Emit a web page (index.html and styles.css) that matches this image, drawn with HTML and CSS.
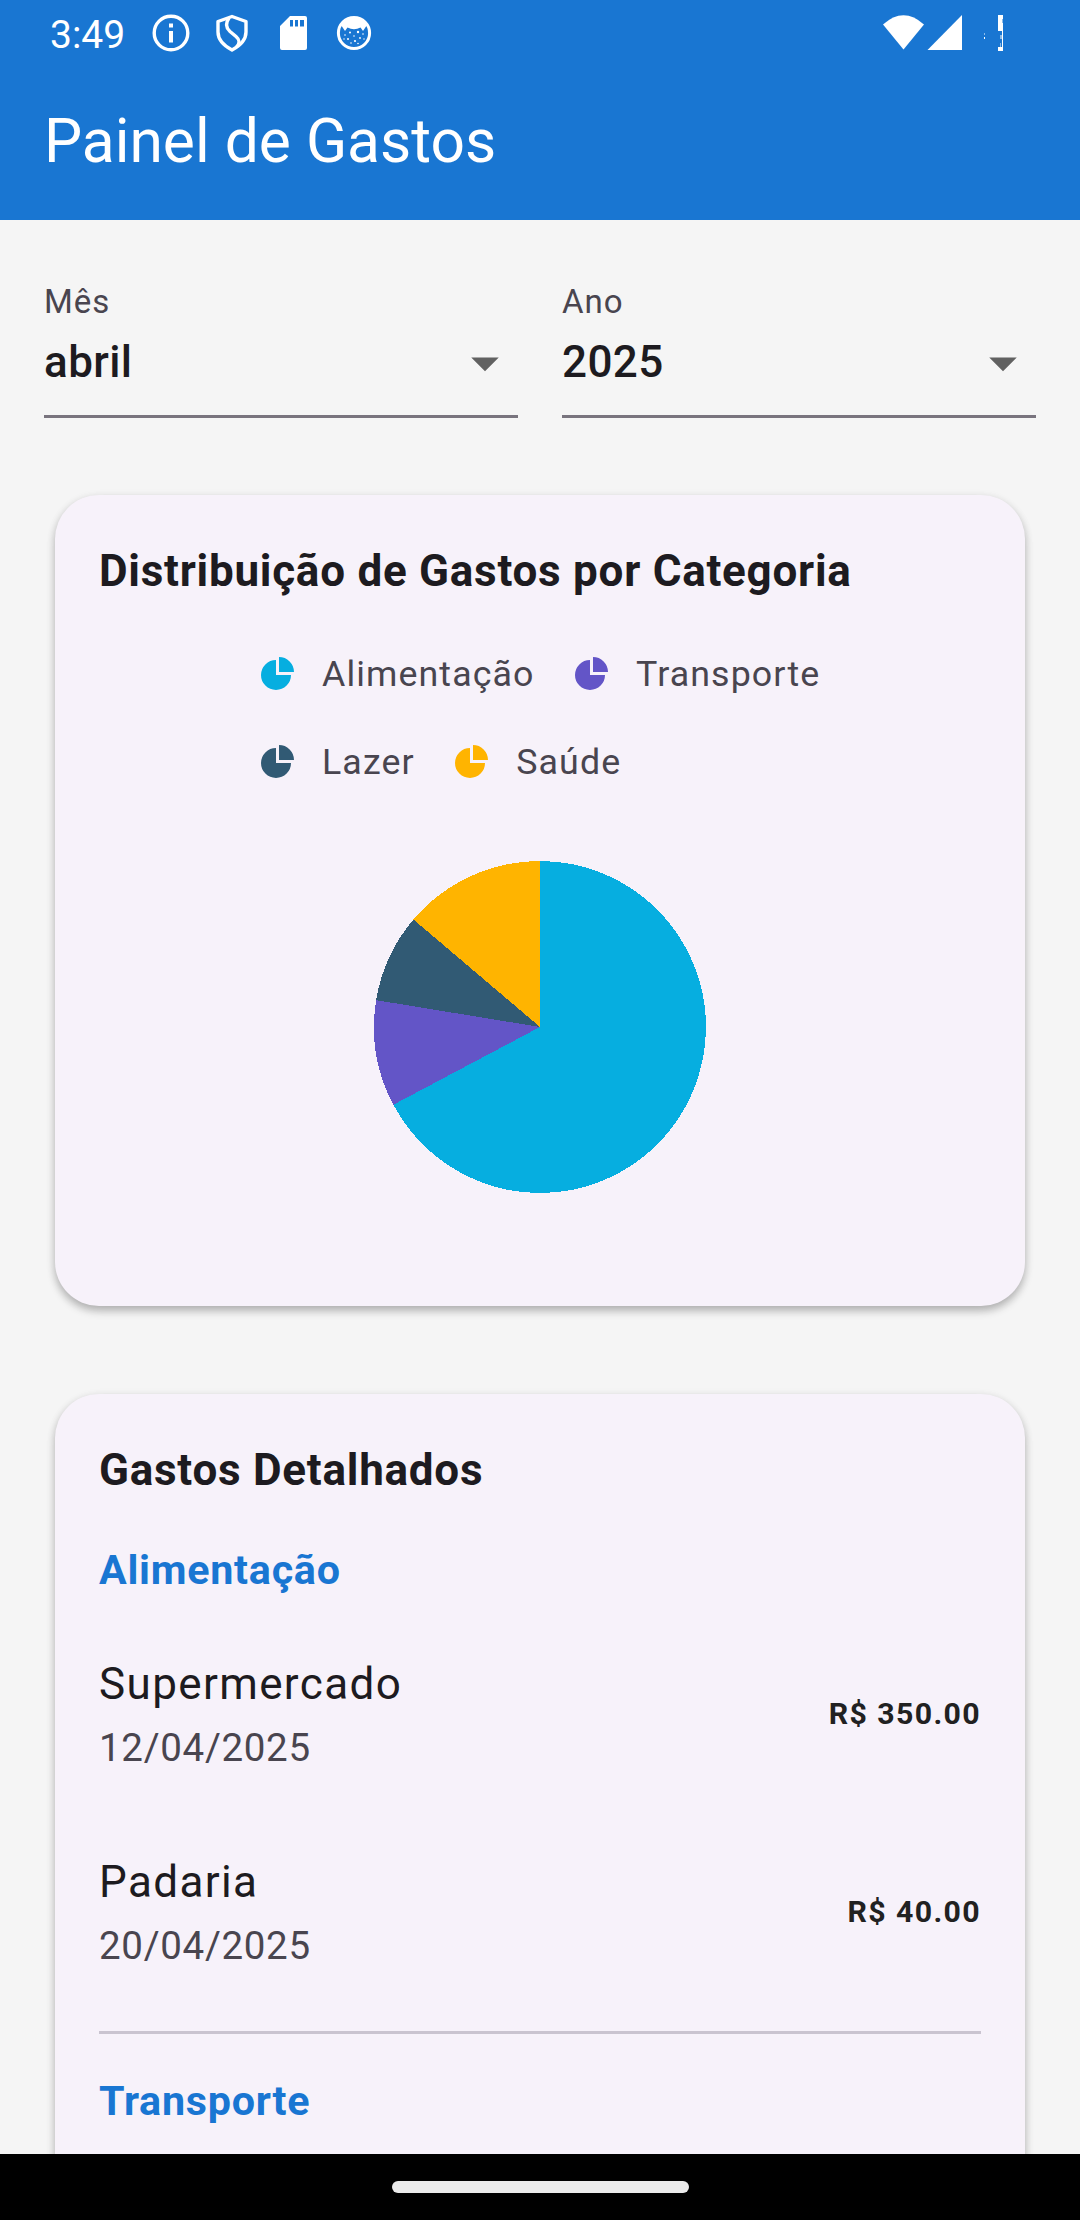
FILE: index.html
```html
<!DOCTYPE html>
<html lang="pt-BR">
<head>
<meta charset="utf-8">
<title>Painel de Gastos</title>
<link rel="stylesheet" href="styles.css">
</head>
<body>
<div class="screen">
  <header class="app-bar">
    <div class="status-bar">
      <span class="clock">3:49</span>
      <svg class="info" width="38" height="38" viewBox="0 0 38 38"><circle cx="19" cy="19" r="16.8" fill="none" stroke="#fff" stroke-width="3.4"/><path d="M17 9.500h4v4h-4zM17 17h4v11.500h-4z" fill="#fff"/></svg>
      <svg class="shield" width="32" height="38" viewBox="0 0 32 38"><path d="M16 2.500 30 7.500V18C30 26 23.500 32 16 36 8.500 32 2 26 2 18V7.500Z" fill="none" stroke="#fff" stroke-width="3.400" stroke-linejoin="round"/><path d="M13 4C9.500 9 10 14 14 17.500L20 22.500C24 26 24 29 20.500 33" fill="none" stroke="#fff" stroke-width="3.400"/></svg>
      <svg class="card-slot" width="27" height="34" viewBox="0 0 27 34"><path fill="#fff" fill-rule="evenodd" d="M10 0H25a2 2 0 0 1 2 2V32a2 2 0 0 1-2 2H2a2 2 0 0 1-2-2V10ZM10 4v6.500h3V4ZM15 4v6.500h3V4ZM20 4v6.500h4V4Z"/></svg>
      <svg class="face" width="36" height="36" viewBox="0 0 36 36"><circle cx="18" cy="18" r="15.600" fill="none" stroke="#fff" stroke-width="3"/><path d="M5 10 10 4 18 2 26 4 31 10 27 16 24.500 12.500Q18 16 11.500 12.500L9 16Z" fill="#fff"/><g fill="#fff"><circle cx="14" cy="17.500" r="1"/><circle cx="22" cy="17" r="1.200"/><circle cx="9" cy="20" r=".8"/><circle cx="27" cy="19" r=".8"/><circle cx="18" cy="21" r=".8"/><circle cx="12" cy="24" r="1"/><circle cx="24" cy="23" r=".9"/><circle cx="19" cy="26" r="1.100"/><circle cx="15" cy="28" r=".8"/><circle cx="22" cy="28.500" r=".8"/><circle cx="28" cy="24" r=".7"/><circle cx="8" cy="24" r=".7"/></g></svg>
      <svg class="wifi" width="42" height="35" viewBox="0 0 42 35"><path d="M0 9.500Q20.500-9 41 9.500L20.500 34.500Z" fill="#fff"/></svg>
      <svg class="signal" width="35" height="35" viewBox="0 0 35 35"><path d="M0.500 35 35 0V35Z" fill="#fff"/></svg>
      <svg class="battery" width="20" height="36" viewBox="0 0 20 36" shape-rendering="crispEdges"><path d="M14 0h5v36h-5v-4h4V16h-4z" fill="#fff"/><path d="M18 4h1v4h-1zM0 18h1v2h-1zM16 20h2v4h-2zM16 28h1v4h-1z" fill="#8bbbe9"/><path d="M0 22h1v2h-1z" fill="#fff"/></svg>
    </div>
    <h1 class="app-title">Painel de Gastos</h1>
  </header>

  <main class="content">
    <section class="filters">
      <div class="field">
        <span class="field-label">Mês</span>
        <div class="field-row"><span class="field-value">abril</span><svg width="66" height="66" viewBox="0 0 24 24"><path d="M7 10l5 5 5-5z" fill="#616161"/></svg></div>
      </div>
      <div class="field">
        <span class="field-label">Ano</span>
        <div class="field-row"><span class="field-value">2025</span><svg width="66" height="66" viewBox="0 0 24 24"><path d="M7 10l5 5 5-5z" fill="#616161"/></svg></div>
      </div>
    </section>

    <section class="card chart-card">
      <h2 class="card-title">Distribuição de Gastos por Categoria</h2>
      <div class="legend">
        <div class="legend-row">
          <div class="legend-item food"><svg class="slice" viewBox="0 0 33 33"><path d="M15 3A15 15 0 1 0 30 18H15ZM18 0A15 15 0 0 1 33 15H18Z"/></svg><span>Alimentação</span></div>
          <div class="legend-item transport"><svg class="slice" viewBox="0 0 33 33"><path d="M15 3A15 15 0 1 0 30 18H15ZM18 0A15 15 0 0 1 33 15H18Z"/></svg><span>Transporte</span></div>
        </div>
        <div class="legend-row">
          <div class="legend-item leisure"><svg class="slice" viewBox="0 0 33 33"><path d="M15 3A15 15 0 1 0 30 18H15ZM18 0A15 15 0 0 1 33 15H18Z"/></svg><span>Lazer</span></div>
          <div class="legend-item health"><svg class="slice" viewBox="0 0 33 33"><path d="M15 3A15 15 0 1 0 30 18H15ZM18 0A15 15 0 0 1 33 15H18Z"/></svg><span>Saúde</span></div>
        </div>
      </div>
      <svg class="pie" width="332" height="332" viewBox="-166 -166 332 332" shape-rendering="crispEdges">
        <circle r="166" fill="#06aee0"/>
        <path d="M0 0L-146.670 77.750A166 166 0 0 1-163.820-26.830Z" fill="#6355c7"/>
        <path d="M0 0L-163.820-26.830A166 166 0 0 1-126.520-107.460Z" fill="#315a74"/>
        <path d="M0 0L-126.520-107.460A166 166 0 0 1 0-166Z" fill="#ffb400"/>
      </svg>
    </section>

    <section class="card details-card">
      <h2 class="card-title">Gastos Detalhados</h2>
      <h3 class="category">Alimentação</h3>
      <div class="expense">
        <div class="expense-text"><span class="expense-name">Supermercado</span><span class="expense-date">12/04/2025</span></div>
        <span class="amount">R$ 350.00</span>
      </div>
      <div class="expense">
        <div class="expense-text"><span class="expense-name">Padaria</span><span class="expense-date">20/04/2025</span></div>
        <span class="amount">R$ 40.00</span>
      </div>
      <hr class="divider">
      <h3 class="category">Transporte</h3>
    </section>
  </main>

  <footer class="nav-bar"><div class="handle"></div></footer>
</div>
</body>
</html>
```
FILE: styles.css
```css
* { box-sizing: border-box; }

body {
  margin: 0;
  font-family: Roboto, "Liberation Sans", sans-serif;
  color: #1d1b20;
  background: #f5f5f5;
}

h1, h2, h3 { margin: 0; font-weight: inherit; }
svg { display: block; flex: none; }

.screen {
  width: 1080px;
  height: 2220px;
  display: flex;
  flex-direction: column;
  overflow: hidden;
}

.app-bar { flex: none; height: 220px; background: #1976d2; color: #fff; }

.status-bar { display: flex; align-items: flex-start; height: 66px; padding-left: 50px; }
.clock { width: 102px; margin-top: 12px; font-size: 39px; line-height: 46px; white-space: nowrap; }
.info { margin-top: 14px; }
.shield { margin: 14px 0 0 26px; }
.card-slot { margin: 16px 0 0 32px; }
.face { margin: 15px 0 0 29px; }
.wifi { margin: 15px 0 0 auto; }
.signal { margin: 15px 0 0 2px; }
.battery { margin: 15px 76px 0 22px; }

.app-title {
  height: 154px;
  padding: 0 0 3px 44px;
  display: flex;
  align-items: center;
  font-size: 60.5px;
  line-height: 76px;
}

.content { flex: 1; min-height: 0; overflow: hidden; padding: 62px 44px 0; }

.filters { display: flex; gap: 44px; }
.field { flex: 1; border-bottom: 3px solid #79747e; padding-bottom: 19px; }
.field-label { display: block; font-size: 33px; line-height: 40px; letter-spacing: 1.03px; color: #49454f; }
.field-row { display: flex; justify-content: space-between; align-items: center; height: 66px; margin-top: 8px; }
.field-value { padding-bottom: 2px; font-size: 44px; line-height: 60px; font-weight: 500; letter-spacing: 0.41px; }

.card {
  margin: 77px 11px 0;
  padding: 44px 44px 0;
  border-radius: 44px;
  background: #f7f2fa;
  box-shadow: 0 5px 8px rgba(0, 0, 0, 0.24), 0 2px 10px rgba(0, 0, 0, 0.08);
}
.chart-card { height: 811px; }
.details-card { margin-top: 88px; height: 900px; }
.card-title { font-size: 44px; line-height: 64px; font-weight: 700; letter-spacing: 0.74px; white-space: nowrap; }

.legend { margin-top: 26px; padding-left: 162px; }
.legend-row { display: flex; gap: 40.5px; height: 88px; }
.legend-item { display: flex; align-items: center; gap: 28px; font-size: 35.75px; line-height: 44px; letter-spacing: 1.1px; color: #49454f; }
.legend-item span { padding-top: 2px; }
.slice { width: 33px; height: 33px; fill: currentColor; }
.food .slice { color: #06aee0; }
.transport .slice { color: #6355c7; }
.leisure .slice { color: #315a74; }
.health .slice { color: #ffb400; }

.pie { margin: 56px auto 0; }

.category { margin-top: 38px; font-size: 41.25px; line-height: 60px; font-weight: 700; letter-spacing: 0.74px; color: #1976d2; }
.category + .expense { margin-top: 15px; }
.expense { display: flex; justify-content: space-between; align-items: center; height: 198px; }
.expense-text { display: flex; flex-direction: column; gap: 3px; padding-bottom: 3px; }
.expense-name { font-size: 44px; line-height: 66px; letter-spacing: 1.375px; }
.expense-date { font-size: 38.5px; line-height: 55px; letter-spacing: 0.69px; color: #49454f; }
.amount { font-size: 30.25px; line-height: 44px; font-weight: 700; letter-spacing: 1.375px; color: #212121; }
.divider { height: 3px; margin: 20px 0 0; border: 0; background: #cac4d0; }
.divider + .category { margin-top: 37px; }

.nav-bar { flex: none; height: 66px; padding-top: 27px; background: #000; }
.handle { width: 297px; height: 12px; margin: 0 auto; border-radius: 6px; background: #ebebeb; }
```
